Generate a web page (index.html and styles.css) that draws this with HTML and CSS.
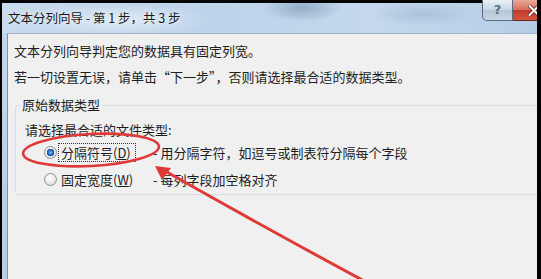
FILE: index.html
```html
<!DOCTYPE html>
<html lang="zh">
<head>
    <meta charset="UTF-8">
    <title>文本分列向导 - 第 1 步，共 3 步</title>
    <link rel="stylesheet" href="styles.css">
</head>
<body>

<div class="screen">
    <div class="window">
        <!-- 标题栏 -->
        <div class="title-bar">
            <span class="title-text">文本分列向导 - 第 1 步，共 3 步</span>
            <button class="help-btn">?</button>
            <button class="close-btn">
                <svg width="12" height="11" viewBox="0 0 12 11">
                    <path d="M1.5 1 L10.5 10 M10.5 1 L1.5 10" stroke="#5a1d16" stroke-width="3.4" stroke-linecap="round"/>
                    <path d="M1.5 1 L10.5 10 M10.5 1 L1.5 10" stroke="#ffffff" stroke-width="2" stroke-linecap="round"/>
                </svg>
            </button>
        </div>

        <div class="frame">
            <div class="frame-left"></div>
            <div class="client">
                <p class="line">文本分列向导判定您的数据具有固定列宽。</p>
                <p class="line">若一切设置无误，请单击“下一步”，否则请选择最合适的数据类型。</p>

                <fieldset class="group">
                    <legend>原始数据类型</legend>
                    <div class="prompt">请选择最合适的文件类型:</div>
                    <div class="radio-row">
                        <span class="radio checked"></span>
                        <span class="radio-label focused">分隔符号(<u>D</u>)</span>
                        <span class="radio-desc">- 用分隔字符，如逗号或制表符分隔每个字段</span>
                    </div>
                    <div class="radio-row">
                        <span class="radio"></span>
                        <span class="radio-label">固定宽度(<u>W</u>)</span>
                        <span class="radio-desc">- 每列字段加空格对齐</span>
                    </div>
                </fieldset>
            </div>
        </div>
    </div>

    <!-- 红色标注 -->
    <svg class="marks" viewBox="0 0 541 279" width="541" height="279">
        <ellipse cx="91" cy="150" rx="68" ry="16" transform="rotate(-3 91 150)" fill="none" stroke="#e03a38" stroke-width="2.6"/>
        <path d="M366 282 Q 262 226 165 171" fill="none" stroke="#e03a38" stroke-width="3"/>
        <polygon points="155,166 171,168 162,180" fill="#e03a38"/>
    </svg>
</div>

</body>
</html>
```

FILE: styles.css
```css
body {
    margin: 0;
    background: #000;
    font-family: "Noto Sans CJK SC", "Microsoft YaHei", sans-serif;
    font-size: 13px;
    color: #1e1e1e;
}
.screen {
    position: relative;
    width: 541px;
    height: 279px;
    box-sizing: border-box;
    padding: 0 4px 0 2px;
    background: #000;
    display: flex;
    overflow: hidden;
}
.window {
    flex: 1;
    display: flex;
    flex-direction: column;
    overflow: hidden;
}

/* 标题栏 */
.title-bar {
    flex: none;
    height: 33px;
    display: flex;
    align-items: flex-start;
    background:
        linear-gradient(#050505 0, #050505 3px, transparent 3px),
        radial-gradient(ellipse 40px 14px at 300px 8px, rgba(110, 140, 170, 0.55), transparent),
        radial-gradient(ellipse 50px 12px at 420px 14px, rgba(150, 175, 200, 0.5), transparent),
        radial-gradient(ellipse 90px 16px at 120px 20px, rgba(235, 242, 250, 0.7), transparent),
        linear-gradient(to right, #c9dbee, #bcd3ea 40%, #c3d8ec 70%, #b5cde6);
}
.title-text {
    margin: 9px 0 0 6px;
    font-size: 12.5px;
    line-height: 18px;
    white-space: nowrap;
    color: #1a1a1a;
    text-shadow: 0 0 5px rgba(255, 255, 255, 0.9);
}
.help-btn {
    flex: none;
    margin-left: auto;
    width: 31px;
    height: 21px;
    padding: 0;
    border: 1px solid #5c6b7d;
    border-top: none;
    border-radius: 0 0 0 5px;
    background: linear-gradient(#e9f0f7, #cad7e4 50%, #b4c5d7 51%, #c9d7e5);
    color: #56708c;
    font-family: "DejaVu Sans", sans-serif;
    font-size: 13px;
    font-weight: bold;
    line-height: 20px;
}
.close-btn {
    flex: none;
    display: flex;
    align-items: center;
    justify-content: center;
    width: 43px;
    height: 21px;
    margin-right: -19px;
    padding: 0;
    border: 1px solid #6a2b22;
    border-top: none;
    border-left: none;
    border-radius: 0 0 5px 0;
    background: linear-gradient(#e9a999, #d4705d 50%, #c3382a 51%, #d2553f);
}

/* 客户区 */
.frame {
    flex: 1;
    display: flex;
}
.frame-left {
    flex: none;
    width: 5px;
    background: linear-gradient(#c2d6eb, #b7cde5);
}
.client {
    flex: 1;
    background: #f0f0f0;
    border-left: 1px solid #8193a7;
    border-top: 1px solid #a3b3c4;
    padding: 4px 0 0 6px;
    overflow: hidden;
}
.line {
    margin: 0;
    line-height: 26px;
    white-space: nowrap;
}
.group {
    margin: 6px -20px 0 1px;
    padding: 5px 0 4px 4px;
    border: 1px solid #d5dfe5;
    border-radius: 3px;
}
.group legend {
    padding: 0 2px;
    line-height: 18px;
}
.prompt {
    line-height: 22px;
    padding-left: 5px;
}
.radio-row {
    display: flex;
    align-items: center;
    height: 22px;
    padding-left: 24px;
    white-space: nowrap;
}
.radio-row + .radio-row {
    margin-top: 5px;
}
.radio {
    flex: none;
    width: 13px;
    height: 13px;
    box-sizing: border-box;
    border-radius: 50%;
    border: 1px solid #8c8f92;
    background: radial-gradient(circle at 40% 35%, #ffffff, #e4e4e4 65%, #cdcdcd);
    margin-right: 1px;
}
.radio.checked {
    background:
        radial-gradient(circle at 50% 50%, #8ec4f4 0, #3b84d2 1.5px, #1c4f9c 3.5px, transparent 4px),
        radial-gradient(circle at 40% 35%, #ffffff, #e4e4e4 65%, #cdcdcd);
}
.radio-label {
    flex: none;
    width: 78px;
    box-sizing: border-box;
    padding: 0 2px;
    border: 1px dotted transparent;
    line-height: 17px;
}
.radio-label.focused {
    border-color: #333;
}
.radio-desc {
    margin-left: 17px;
}
u {
    text-decoration: underline;
}

/* 标注 */
.marks {
    position: absolute;
    left: 0;
    top: 0;
    pointer-events: none;
}
```
